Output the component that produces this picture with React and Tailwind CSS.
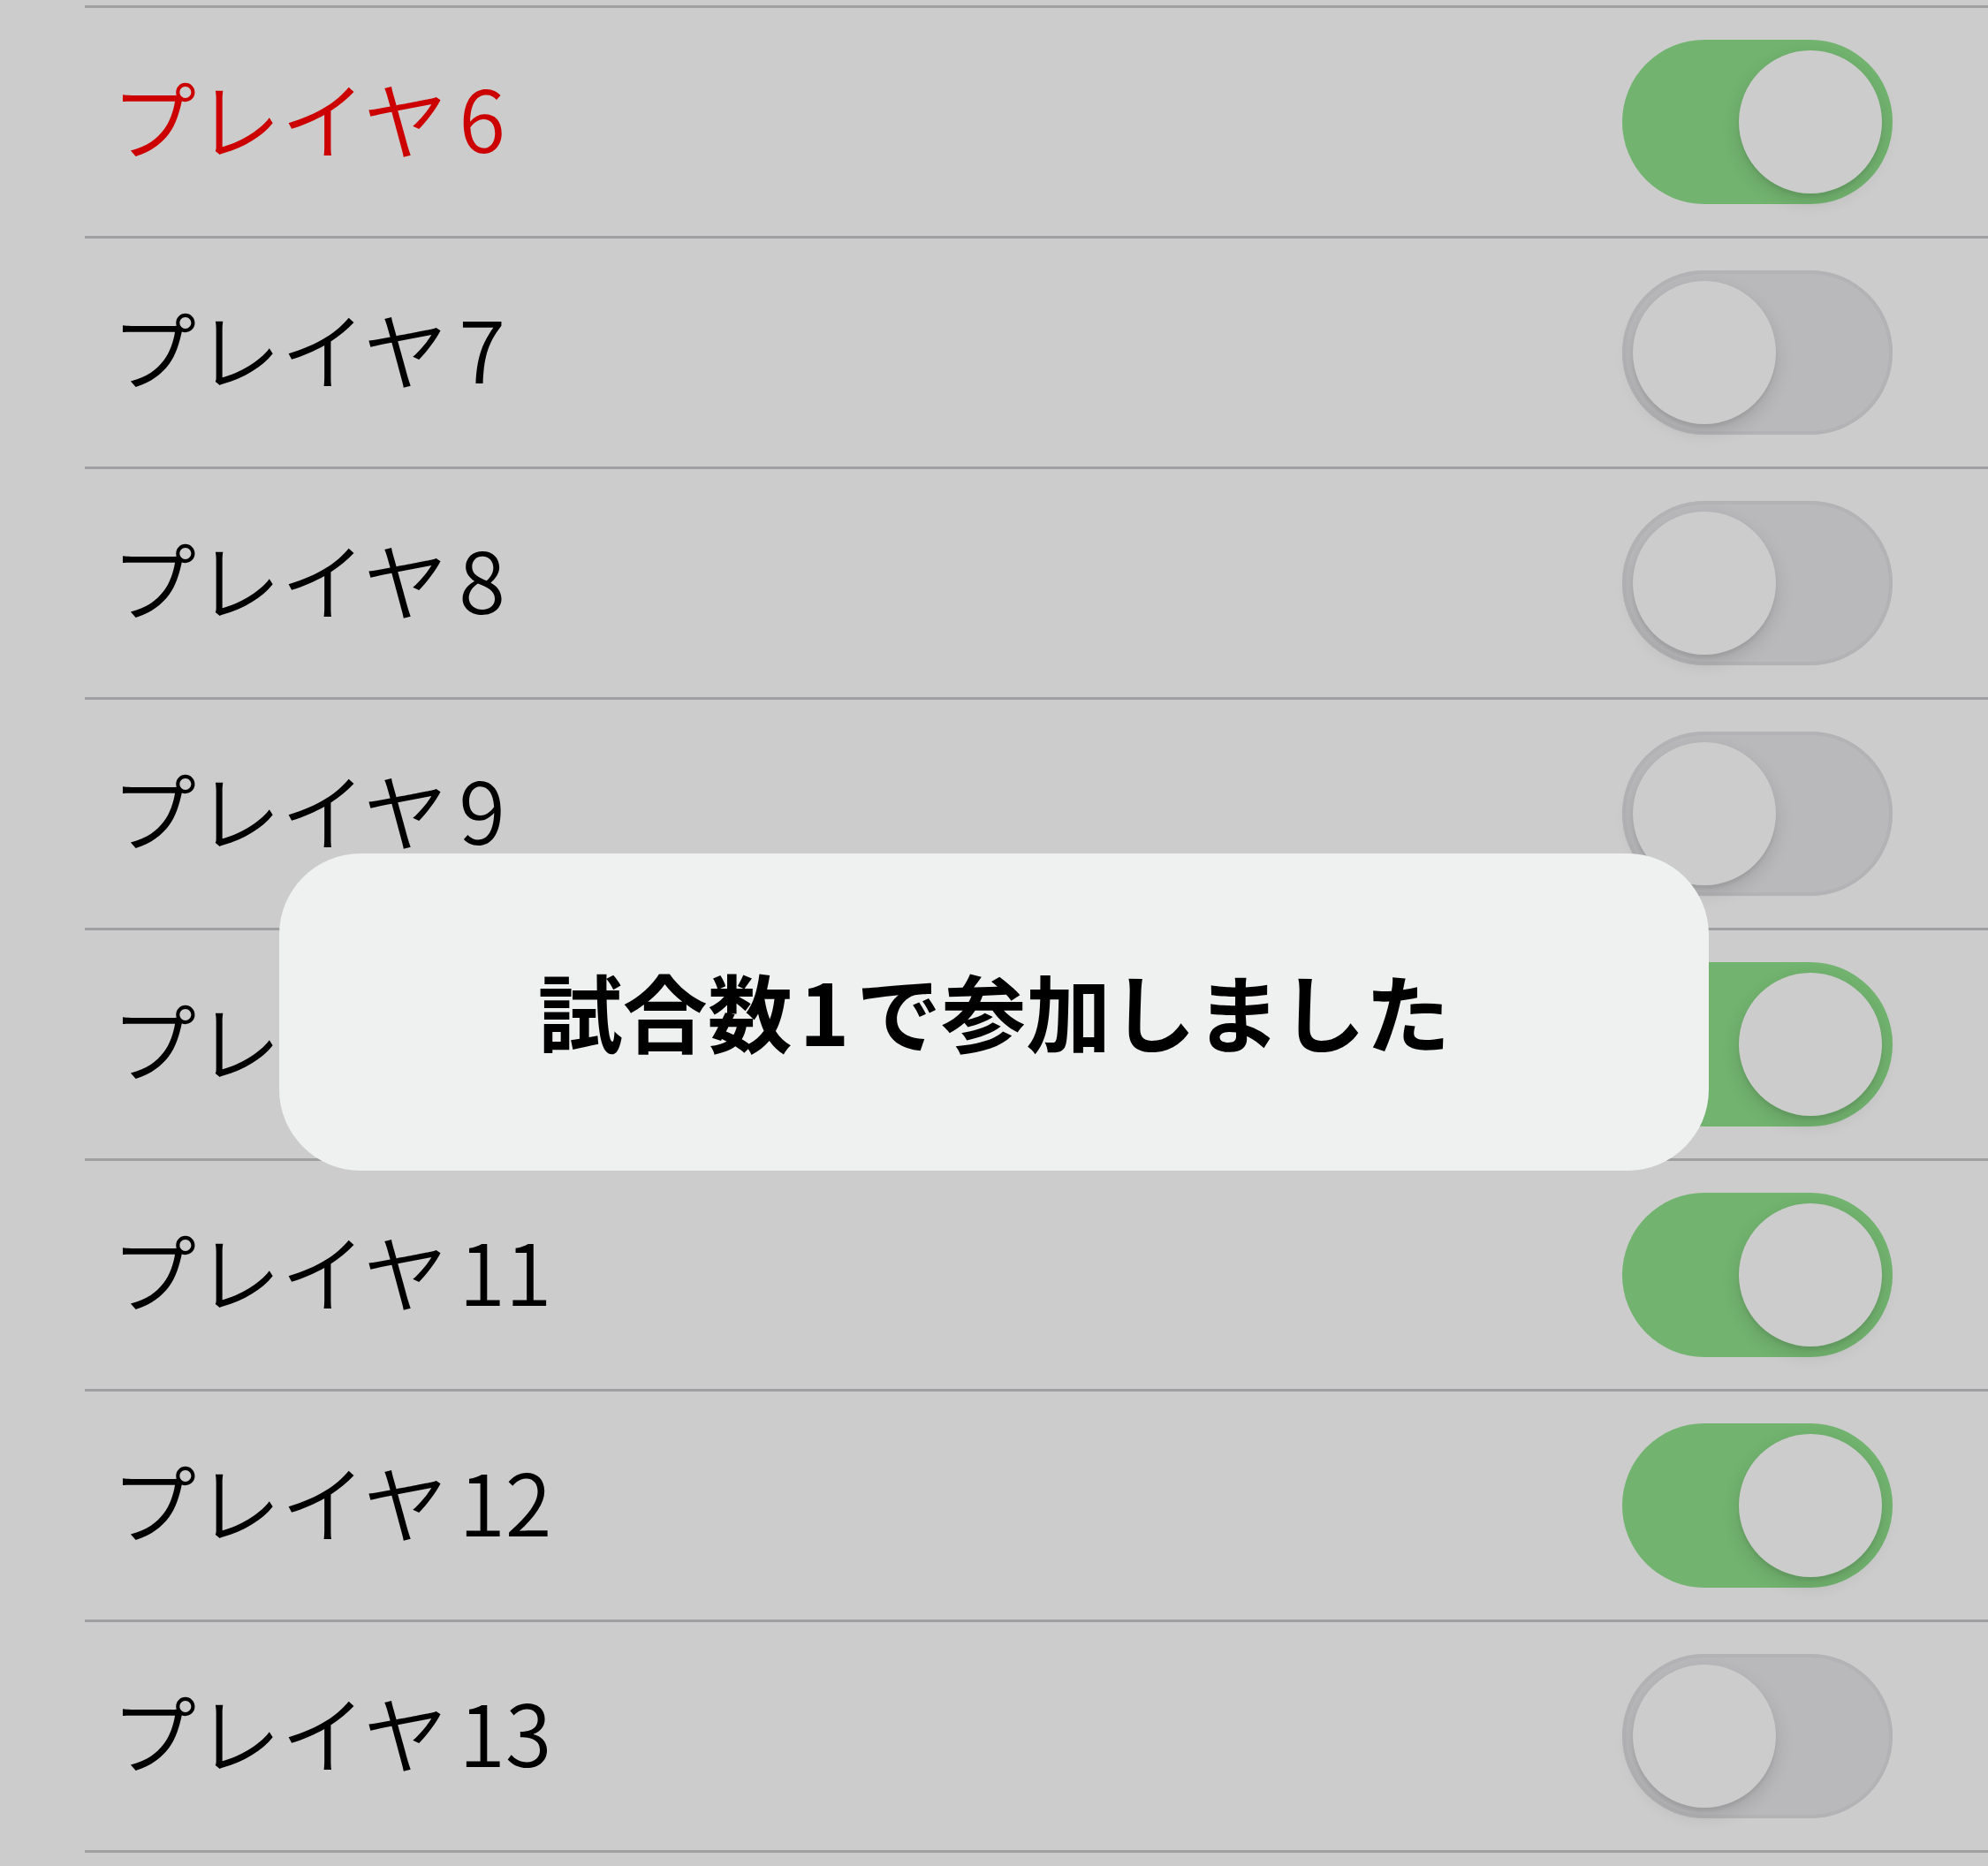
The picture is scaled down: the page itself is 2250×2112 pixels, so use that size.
import React from 'react'

const players = [
  { kana: 'プレイヤ', num: '6', on: true, red: true },
  { kana: 'プレイヤ', num: '7', on: false },
  { kana: 'プレイヤ', num: '8', on: false },
  { kana: 'プレイヤ', num: '9', on: false },
  { kana: 'プレイヤ', num: '10', on: true },
  { kana: 'プレイヤ', num: '11', on: true },
  { kana: 'プレイヤ', num: '12', on: true },
  { kana: 'プレイヤ', num: '13', on: false },
  { kana: 'プレイヤ', num: '14', on: false },
]

function Toggle({ on }) {
  return (
    <div
      className={
        'relative h-[186px] w-[306px] shrink-0 rounded-full ' +
        (on ? 'bg-[#72b36f]' : 'bg-[#b9b9bb] shadow-[inset_0_0_0_4px_#b3b3b5]')
      }
    >
      <div
        className={
          'absolute top-[12px] h-[162px] w-[162px] rounded-full bg-[#cccccc] shadow-[0_8px_20px_rgba(0,0,0,0.13),0_4px_3px_rgba(0,0,0,0.05)] ' +
          (on ? 'left-[132px]' : 'left-[12px]')
        }
      />
    </div>
  )
}

function Row({ player }) {
  return (
    <div className="ml-[96px] flex h-[261px] items-center border-t-[3px] border-[#a0a0a3] pl-[30px] pr-[108px]">
      <span
        className={
          'flex-1 pb-[12px] text-[96px] font-[350] leading-none ' +
          (player.red ? 'text-[#cc0000]' : 'text-black')
        }
      >
        {player.kana}
        <span className="ml-[12px]">{player.num}</span>
      </span>
      <Toggle on={player.on} />
    </div>
  )
}

export default function App() {
  return (
    <div
      className="relative h-[2112px] w-[2250px] overflow-hidden bg-[#cccccc]"
      style={{ fontFamily: '"Noto Sans CJK JP", "Noto Sans", sans-serif' }}
    >
      <div className="h-[6px]" />
      {players.map((p) => (
        <Row key={p.num} player={p} />
      ))}

      <div className="absolute left-[316px] top-[966px] flex h-[359px] w-[1618px] items-center justify-center rounded-[92px] bg-[#eff1f0] pb-[6px]">
        <span className="text-[96px] font-bold leading-none text-black">
          試合数<span className="mx-[8px]">1</span>で参加しました
        </span>
      </div>
    </div>
  )
}
